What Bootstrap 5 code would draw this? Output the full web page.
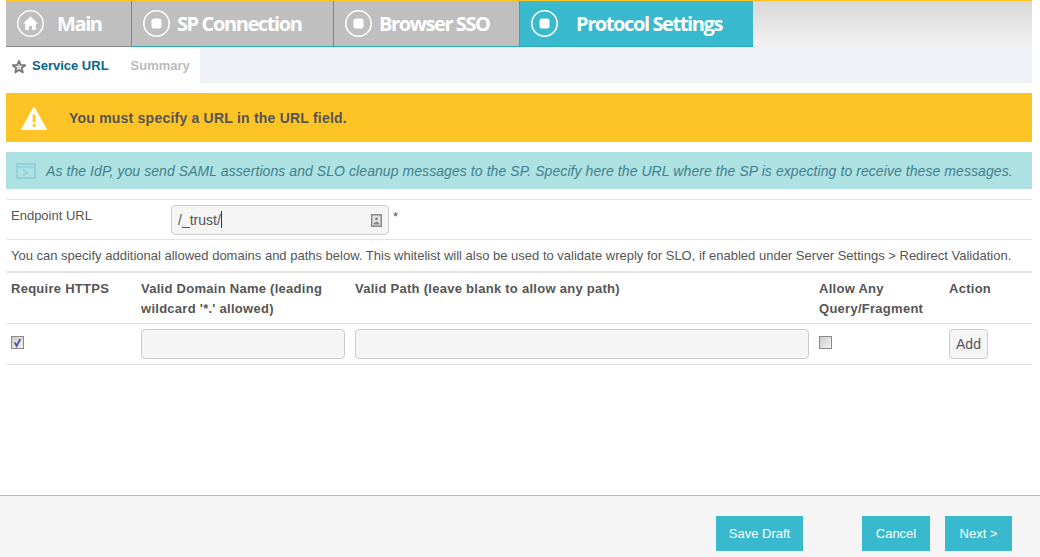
<!DOCTYPE html>
<html lang="en"><head><meta charset="utf-8"><title>Protocol Settings</title>
<link rel="stylesheet" href="https://cdn.jsdelivr.net/npm/bootstrap@5.3.0/dist/css/bootstrap.min.css">
<style>
html,body{height:557px;overflow:hidden}
body{font-family:"Liberation Sans",Arial,sans-serif;font-size:13px;color:#555;background:#fff;display:flex;flex-direction:column}
.shell{flex:1 1 auto;padding:0 8px 0 6px;min-height:0}
.tabbar{height:47px;border-top:1px solid #fec325;background:linear-gradient(#d8d8d8,#f2f2f2)}
.stept{height:46px;background:#bfbfbf;color:#fff;font-family:"Open Sans",sans-serif;font-weight:700;font-size:20px;letter-spacing:-1.4px;border-bottom:1px solid #2aa9bd;gap:6px;padding-left:10px;line-height:1}
.stept svg{flex:none;width:29px;height:29px}
.s1{width:125px;border-bottom-color:#888;gap:12px}
.s2{width:202px;border-left:1px solid #2aa9bd;gap:6px}
.s3{width:187px;border-left:1px solid #2aa9bd;border-right:1px solid #2aa9bd;gap:6px}
.s4{width:233px;background:#38b9ce;padding-left:10px;gap:17px}
.subbar{height:36px;background:#eff3f8}
.subtabs{width:194px;background:#fff;height:100%;font-weight:700;font-size:13px;padding-top:1px}
.subtabs svg{margin:2px 5px 0 5px}
.subcur{color:#05668d;margin-right:22px}
.subdim{color:#bbb}
.warnbar{height:49px;margin-top:10px;background:#fec325;font-size:14px;font-weight:700;letter-spacing:.22px;color:#555;padding:1px 0 0 14px;gap:21px}
.infobar{height:37px;margin-top:10px;background:#aee1e1;font-size:14px;font-style:italic;letter-spacing:.07px;color:#41808f;padding:1px 0 0 10px;gap:10px;white-space:nowrap}
.endrow{margin-top:10px;border-top:1px solid #e4e4e4;height:41px;padding-left:5px;border-bottom:1px solid #e4e4e4;align-items:flex-start}
.endlbl{width:160px;padding-top:8px;line-height:15px}
.fakefield{background:#f5f5f5;border:1px solid #ccc;border-radius:4px;height:30px;color:#555;font-size:14px;padding:0 6px}
.urlbox{width:218px;margin-top:5px}
.caret{display:inline-block;width:1px;height:17px;background:#333;vertical-align:-3px}
.req{margin:9px 0 0 4px;line-height:15px}
.note{height:31px;padding-left:5px;line-height:31px;white-space:nowrap}
table.tbl{width:100%;table-layout:fixed;border-top:2px solid #e4e4e4;margin:0;color:#555}
.tbl th{font-weight:700;font-size:13px;letter-spacing:.27px;line-height:20px;padding:6px 5px 4px;vertical-align:top;border-bottom:1px solid #e4e4e4}
.tbl td{padding:5px;vertical-align:top;border-bottom:1px solid #e4e4e4;height:41px}
.tbl .fakefield{width:100%}
.cbsvg{display:block;margin-top:7px}
.addbtn{--bs-btn-padding-x:6px;--bs-btn-padding-y:0;--bs-btn-font-size:14px;--bs-btn-color:#555;--bs-btn-bg:#f5f5f5;--bs-btn-border-color:#ccc;--bs-btn-border-radius:4px;--bs-btn-hover-bg:#eee;--bs-btn-hover-color:#555;--bs-btn-hover-border-color:#ccc;height:30px;width:39px;line-height:28px}
.footbar{flex:none;height:62px;background:#f5f5f5;border-top:1px solid #bbb;padding-top:20px}
.footbtn{--bs-btn-bg:#38b9ce;--bs-btn-color:#fff;--bs-btn-border-radius:0;--bs-btn-border-width:0;--bs-btn-font-size:13px;--bs-btn-padding-x:0;--bs-btn-padding-y:0;--bs-btn-hover-bg:#38b9ce;--bs-btn-hover-color:#fff;height:35px;line-height:35px}
.w87{width:87px;margin-left:716px}.w68{width:68px;margin-left:59px}.w67{width:67px;margin-left:15px}
</style></head><body>
<div class="shell">
<div class="tabbar d-flex">
 <div class="stept s1 d-flex align-items-center"><svg viewBox="0 0 29 29"><circle cx="14.500" cy="14.500" r="12.700" fill="none" stroke="#fff" stroke-width="1.600" opacity=".9"/><path d="M14.500 7.500 7 14.500h2.200v6.500h3.800v-4h3v4h3.800v-6.500H22z" fill="#fff"/></svg><span>Main</span></div>
 <div class="stept s2 d-flex align-items-center"><svg viewBox="0 0 29 29"><circle cx="14.500" cy="14.500" r="12.700" fill="none" stroke="#fff" stroke-width="1.600"/><rect x="9.500" y="9.500" width="10" height="10" rx="2.500" fill="#fff"/></svg><span>SP Connection</span></div>
 <div class="stept s3 d-flex align-items-center"><svg viewBox="0 0 29 29"><circle cx="14.500" cy="14.500" r="12.700" fill="none" stroke="#fff" stroke-width="1.600"/><rect x="9.500" y="9.500" width="10" height="10" rx="2.500" fill="#fff"/></svg><span>Browser SSO</span></div>
 <div class="stept s4 d-flex align-items-center"><svg viewBox="0 0 29 29"><circle cx="14.500" cy="14.500" r="12.700" fill="none" stroke="#fff" stroke-width="1.600"/><rect x="9.500" y="9.500" width="10" height="10" rx="2.500" fill="#fff"/></svg><span>Protocol Settings</span></div>
</div>
<div class="subbar">
 <div class="subtabs d-flex align-items-center"><svg width="16" height="15" viewBox="0 0 16 15"><path d="M8 1.800 9.700 5.800 14.200 6.200 10.800 9.100 11.800 13.400 8 11.100 4.200 13.400 5.200 9.100 1.800 6.200 6.300 5.800Z" fill="#ddd" stroke="#777" stroke-width="1.800" stroke-linejoin="round"/></svg><span class="subcur">Service URL</span><span class="subdim">Summary</span></div>
</div>
<div class="warnbar d-flex align-items-center"><svg width="28" height="26" viewBox="0 0 28 26"><path d="M14 2 26.500 24.500H1.500Z" fill="#fff" stroke="#fff" stroke-width="1" stroke-linejoin="round"/><rect x="12.700" y="9.500" width="2.600" height="8" fill="#fec325"/><rect x="12.700" y="19" width="2.600" height="2.800" fill="#fec325"/></svg><span>You must specify a URL in the URL field.</span></div>
<div class="infobar d-flex align-items-center"><svg width="20" height="16" viewBox="0 0 20 16"><rect x="1" y="1" width="18" height="14" fill="none" stroke="#93d1da" stroke-width="2"/><path d="M2 4H18" stroke="#93d1da" stroke-width="1.500"/><path d="M7 6.500 11 9.500 7 12.500" fill="none" stroke="#93d1da" stroke-width="2"/></svg><span>As the IdP, you send SAML assertions and SLO cleanup messages to the SP. Specify here the URL where the SP is expecting to receive these messages.</span></div>
<div class="endrow d-flex">
 <div class="endlbl">Endpoint URL</div>
 <div class="fakefield urlbox d-flex align-items-center justify-content-between"><span>/_trust/<i class="caret"></i></span><svg width="11" height="13" viewBox="0 0 11 13"><rect x=".75" y=".75" width="9.500" height="11.500" fill="#e4e4e4" stroke="#888" stroke-width="1.500"/><circle cx="5.500" cy="4.800" r="1.500" fill="#888"/><path d="M2.500 10.500c0-3.800 6-3.800 6 0z" fill="#888"/></svg></div>
 <div class="req">*</div>
</div>
<div class="note">You can specify additional allowed domains and paths below. This whitelist will also be used to validate wreply for SLO, if enabled under Server Settings &gt; Redirect Validation.</div>
<table class="tbl">
 <colgroup><col style="width:130px"><col style="width:214px"><col style="width:464px"><col style="width:130px"><col></colgroup>
 <thead><tr><th>Require HTTPS</th><th>Valid Domain Name (leading wildcard '*.' allowed)</th><th>Valid Path (leave blank to allow any path)</th><th>Allow Any Query/Fragment</th><th>Action</th></tr></thead>
 <tbody><tr>
  <td><svg class="cbsvg" width="13" height="13" viewBox="0 0 13 13"><defs><linearGradient id="cbg" x1="0" y1="0" x2="1" y2="1"><stop offset="0" stop-color="#c8c8c8"/><stop offset="1" stop-color="#f6f6f6"/></linearGradient></defs><rect x=".5" y=".5" width="12" height="12" fill="url(#cbg)" stroke="#8a8a8a"/><path d="M3.800 6.500 5.700 10 9.300 3" fill="none" stroke="#4a5aa8" stroke-width="1.800"/></svg></td>
  <td><div class="fakefield"></div></td>
  <td><div class="fakefield"></div></td>
  <td><svg class="cbsvg" width="13" height="13" viewBox="0 0 13 13"><rect x=".5" y=".5" width="12" height="12" fill="url(#cbg)" stroke="#8a8a8a"/></svg></td>
  <td><button type="button" class="btn addbtn">Add</button></td>
 </tr></tbody>
</table>
</div>
<div class="footbar d-flex align-items-start">
 <button type="button" class="btn footbtn w87">Save Draft</button>
 <button type="button" class="btn footbtn w68">Cancel</button>
 <button type="button" class="btn footbtn w67">Next &gt;</button>
</div>
<script src="https://cdn.jsdelivr.net/npm/bootstrap@5.3.0/dist/js/bootstrap.bundle.min.js"></script>
</body></html>
